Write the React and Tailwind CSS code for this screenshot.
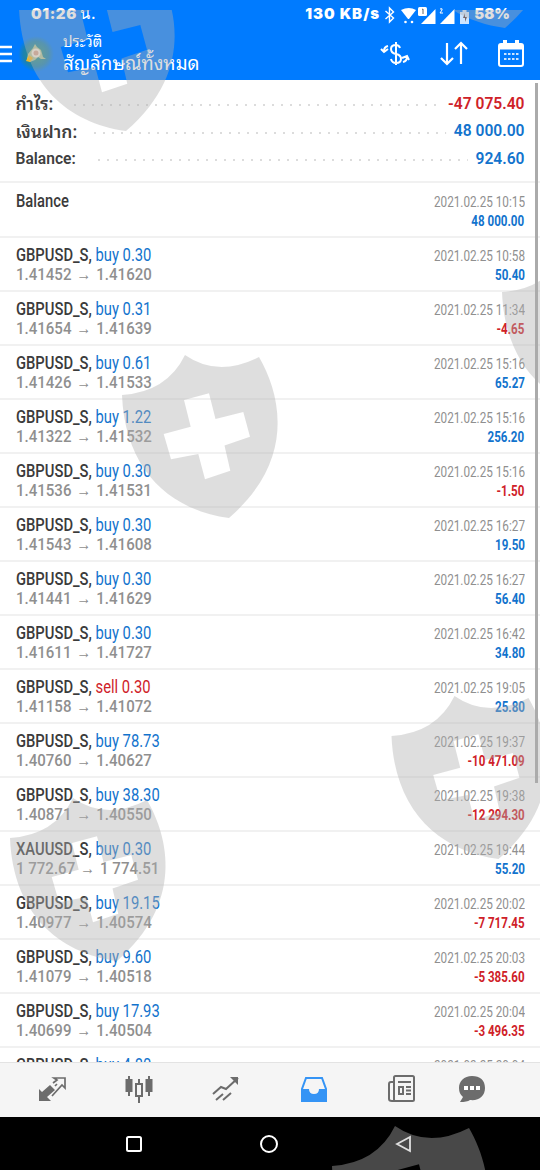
import React from "react";

const rows = [
  ["GBPUSD_S", "buy 0.30", "1.41452", "1.41620", "10:58", "50.40"],
  ["GBPUSD_S", "buy 0.31", "1.41654", "1.41639", "11:34", "-4.65"],
  ["GBPUSD_S", "buy 0.61", "1.41426", "1.41533", "15:16", "65.27"],
  ["GBPUSD_S", "buy 1.22", "1.41322", "1.41532", "15:16", "256.20"],
  ["GBPUSD_S", "buy 0.30", "1.41536", "1.41531", "15:16", "-1.50"],
  ["GBPUSD_S", "buy 0.30", "1.41543", "1.41608", "16:27", "19.50"],
  ["GBPUSD_S", "buy 0.30", "1.41441", "1.41629", "16:27", "56.40"],
  ["GBPUSD_S", "buy 0.30", "1.41611", "1.41727", "16:42", "34.80"],
  ["GBPUSD_S", "sell 0.30", "1.41158", "1.41072", "19:05", "25.80"],
  ["GBPUSD_S", "buy 78.73", "1.40760", "1.40627", "19:37", "-10 471.09"],
  ["GBPUSD_S", "buy 38.30", "1.40871", "1.40550", "19:38", "-12 294.30"],
  ["XAUUSD_S", "buy 0.30", "1 772.67", "1 774.51", "19:44", "55.20"],
  ["GBPUSD_S", "buy 19.15", "1.40977", "1.40574", "20:02", "-7 717.45"],
  ["GBPUSD_S", "buy 9.60", "1.41079", "1.40518", "20:03", "-5 385.60"],
  ["GBPUSD_S", "buy 17.93", "1.40699", "1.40504", "20:04", "-3 496.35"],
  ["GBPUSD_S", "buy 4.80", "1.40690", "1.40500", "20:04", "-912.00"],
];

const tone = (v) => (v.startsWith("-") ? "text-[#cf2128]" : "text-[#1273cd]");

function Stamp({ time, value }) {
  return (
    <div className="flex flex-col items-end whitespace-nowrap">
      <span className="origin-right scale-x-[0.82] text-[14.3px] leading-[19px] text-[#8f8f8f]">2021.02.25 {time}</span>
      <span className={"origin-right scale-x-[0.81] text-[14.3px] font-bold leading-[19px] " + tone(value)}>{value}</span>
    </div>
  );
}

function Deal({ row: [symbol, side, from, to, time, value] }) {
  return (
    <div className="flex h-[54px] shrink-0 justify-between border-b-2 border-[#f1f1f1] pl-[15.5px] pr-[15.5px] pt-[7px]">
      <div className="flex flex-col items-start whitespace-nowrap">
        <span className="origin-left scale-x-[0.83] text-[17.8px] leading-[20px]">
          <span className="font-medium text-[#3b3b3b]">{symbol},</span>{" "}
          <span className={side.startsWith("sell") ? "text-[#cf2128]" : "text-[#1273cd]"}>{side}</span>
        </span>
        <span className="origin-left scale-x-[0.87] text-[17.3px] font-medium leading-[19px] text-[#8f8f8f]">
          {from} <span className="inline-block w-[20px] text-center font-['Liberation_Sans'] text-[17px] font-bold leading-none">→</span> {to}
        </span>
      </div>
      <div className="pt-[2px]"><Stamp time={time} value={value} /></div>
    </div>
  );
}

function Summary({ label, value, dots, thai }) {
  return (
    <div className="flex h-[27.5px] items-center text-[15.6px] font-semibold">
      <span className={thai ? "text-[17.5px] leading-[20px] text-[#404040]" : "text-[#404040]"}>{label}</span>
      <svg className="h-[4px] min-w-0 flex-1" aria-hidden="true">
        <line x1={dots} y1="3" x2="98%" y2="3" stroke="#dcdcdc" strokeWidth="2" strokeDasharray="2 7" />
      </svg>
      <span className={tone(value)}>{value}</span>
    </div>
  );
}

const SHIELD =
  "M185 355Q218 378 259 357C281 395 296 460 229 518C170 510 125 470 122 395Q167 392 185 355Z" +
  "M184 400L190.700 426.700L163.700 434L171 459.300L198.300 454L205 479.300L230.300 470.700L224.500 445.500L250 436.700L243.300 412L215.500 419L209 393.300Z";
const shields = [[-103, -387], [276, -490], [380, -103], [0, 0], [269.5, 341], [-112, 443], [210, 771]];

function Watermark() {
  return (
    <div className="pointer-events-none absolute inset-x-0 bottom-0 top-[10px] overflow-hidden">
      <svg className="block h-[1160px] w-[540px]" viewBox="0 10 540 1160" fill="rgb(176 176 176 / 0.41)" fillRule="evenodd">
        {shields.map(([x, y]) => <path key={x} d={SHIELD} transform={`translate(${x} ${y})`} />)}
      </svg>
    </div>
  );
}

function StatusIcons() {
  return (
    <svg width="86" height="20" viewBox="0 0 86 20" fill="white">
      <path d="M1.500 7l8 7-4 4V4l4 4-8 7" fill="none" stroke="white" strokeWidth="1.400" />
      <path d="M17 6q8-4 15 0l-7 9h-1z" />
      <circle cx="21.500" cy="18" r="1.300" /><circle cx="28" cy="18" r="1.300" />
      <path d="M51.500 5v15H37z" /><rect x="34" y="3" width="9" height="9" rx="1.500" />
      <path d="M38 5.500l1-.5v5" stroke="#666" fill="none" />
      <path d="M70.500 5v15H56z" /><path d="M56 5q3-1 2 1l-2 3h3" stroke="white" fill="none" />
      <path d="M76 8h9v12h-9zM78.500 6h4v2h-4z" opacity=".8" /><path d="M81 9l-2 5h2v4l2-5h-2z" fill="#75676c" />
    </svg>
  );
}

export default function App() {
  return (
    <div className="relative flex h-[1170px] w-[540px] flex-col overflow-hidden bg-white font-[Roboto,'Noto_Sans_Thai_Looped','Noto_Sans_Thai','Noto_Sans',sans-serif]">
      <header className="flex h-[80px] shrink-0 flex-col bg-[#007bff] text-white">
        <div className="flex h-[28px] items-center justify-between pl-[31px] pr-[30px] font-[Inter,Roboto,sans-serif] text-[15px] font-black">
          <span className="tracking-[0.6px]">01:26 <span className="font-medium">น.</span></span>
          <div className="flex items-center gap-[4px]"><span className="tracking-[1px]">130 KB/s</span><StatusIcons /><span>58%</span></div>
        </div>
        <div className="flex h-[52px] items-center">
          <svg width="12" height="18" viewBox="0 0 12 18" className="shrink-0"><path d="M0 2h12M0 9h12M0 16h12" stroke="white" strokeWidth="2.400" /></svg>
          <svg width="36" height="36" viewBox="0 0 36 36" className="ml-[6px] shrink-0">
            <defs><radialGradient id="badge"><stop offset=".35" stopColor="#2b8d91" /><stop offset=".7" stopColor="#1b82b0" /><stop offset="1" stopColor="#007bff" /></radialGradient></defs>
            <circle cx="18" cy="18" r="18" fill="url(#badge)" />
            <path d="M9 23l1-5 5-6 2-4 2 3 4 3 2 7 3 2-5 0-3-2-3 3-5 2z" fill="#b5c69a" />
            <path d="M8 25l3-6 4 3-3 4z" fill="#f0b62a" />
            <circle cx="18" cy="17" r="3.500" fill="#d9a58e" stroke="#f4e9d8" strokeWidth="2" />
          </svg>
          <div className="ml-[9px] flex flex-col whitespace-nowrap">
            <span className="text-[14.8px] leading-[20px]">ประวัติ</span>
            <span className="text-[18.7px] leading-[24px]">สัญลักษณ์ทั้งหมด</span>
          </div>
          <div className="ml-auto flex items-center gap-[29.5px] pr-[15px]">
            <svg width="30" height="28" viewBox="0 0 30 28" fill="none" stroke="white" strokeWidth="2">
              <path d="M16 2v23M20 8q-1-3-4-3-5 0-5 4t5 5q5 1 5 5t-5 4q-4 0-5-4M8 6q-4 1-4 5M1 9l3 3 4-3M23 22q4-1 4-5M22 18l5-2 2 4" />
            </svg>
            <svg width="28" height="28" viewBox="0 0 28 28" fill="none" stroke="white" strokeWidth="2.200"><path d="M7 3v21M1 18l6 6 6-6M21 24V3M15 9l6-6 6 6" /></svg>
            <svg width="28" height="30" viewBox="0 0 28 30" fill="none" stroke="white" strokeWidth="2"><rect x="2" y="5" width="24" height="22" rx="2" /><path d="M3 8h22" strokeWidth="5" /><path d="M8 1v5M20 1v5" strokeWidth="4" /><path d="M7 15h15M7 20h15" strokeWidth="2.200" strokeDasharray="2.500 1.500" opacity=".8" /></svg>
          </div>
        </div>
      </header>

      <section className="h-[103px] shrink-0 border-b-2 border-[#f1f1f1] pl-[15.5px] pr-[15.5px] pt-[10.5px]">
        <Summary label="กำไร:" value="-47 075.40" dots="21" thai />
        <Summary label="เงินฝาก:" value="48 000.00" dots="17" thai />
        <Summary label="Balance:" value="924.60" dots="22" />
      </section>

      <main className="flex min-h-0 flex-1 flex-col overflow-hidden">
        <div className="flex h-[55px] shrink-0 justify-between border-b-2 border-[#f1f1f1] pl-[15.5px] pr-[15.5px] pt-[8px]">
          <span className="origin-left scale-x-[0.83] text-[17.8px] font-medium leading-[20px] text-[#3b3b3b]">Balance</span>
          <div className="pt-[2px]"><Stamp time="10:15" value="48 000.00" /></div>
        </div>
        {rows.map((row, i) => <Deal key={i} row={row} />)}
      </main>

      <nav className="flex h-[55px] shrink-0 items-center border-t border-[#e3e3e3] bg-[#f5f5f5] pb-[3px] pl-[38px] text-[#6c6c6c]">
        <svg width="28" height="28" viewBox="0 0 28 28" fill="none" stroke="currentColor" strokeWidth="1.700"><path d="M1 26V14l3 3 8-7 5 5-8 7 4 4z" fill="currentColor" stroke="none" /><path d="M15 8l4-3-3-2h11v10l-3-3-10 11M19 9l-2 2" /></svg>
        <svg className="ml-[58px]" width="30" height="30" viewBox="0 0 30 30" fill="none" stroke="currentColor" strokeWidth="2"><path d="M5 2v20M25 2v20M15 5v5M15 23v6" /><path d="M1.500 5h7v13h-7zM21.500 5h7v13h-7z" fill="currentColor" stroke="none" /><path d="M12 10h6v12h-6z" /></svg>
        <svg className="ml-[58px]" width="28" height="28" viewBox="0 0 28 28" fill="none" stroke="currentColor" strokeWidth="2"><path d="M1 19l8-7 5 2L26 3M4 25l7-6M11 25l8-7" /><path d="M18 2h8v8z" fill="currentColor" stroke="none" /></svg>
        <svg className="ml-[60px]" width="28" height="28" viewBox="0 0 28 28" fill="none" stroke="#3594f5" strokeWidth="2"><path d="M2 25V14L6 3h16l4 11v11z" /><path d="M1 14h8q0 5 5 5t5-5h8v13H1z" fill="#3594f5" stroke="none" /></svg>
        <svg className="ml-[59px]" width="29" height="28" viewBox="0 0 29 28" fill="none" stroke="currentColor" strokeWidth="2"><rect x="7" y="1" width="20" height="25" rx="1.500" /><path d="M7 7H4q-2 0-2 2v15q0 2 3 2h4M11 7h13M19 12h5M19 15.500h5M19 19h5" /><path d="M12 12h4v7h-4z" /></svg>
        <svg className="ml-[42px]" width="28" height="28" viewBox="0 0 28 28"><path d="M14 1C6 1 1 6 1 13q0 6 4 9l-3 5q7 0 10-2c9 1 15-4 15-12S22 1 14 1z" fill="currentColor" /><path d="M6 11h4v4H6zM12 11h4v4h-4zM18 11h4v4h-4z" fill="white" /></svg>
      </nav>

      <footer className="flex h-[53px] shrink-0 items-center justify-center gap-[117px] bg-black pr-[2px]">
        <svg width="18" height="18" viewBox="0 0 18 18"><rect x="2" y="2" width="14" height="14" rx="1.500" fill="none" stroke="white" strokeWidth="2" /></svg>
        <svg width="18" height="18" viewBox="0 0 18 18"><circle cx="9" cy="9" r="8" fill="none" stroke="white" strokeWidth="2" /></svg>
        <svg width="18" height="18" viewBox="0 0 18 18"><path d="M2 9L15 2v14z" fill="none" stroke="white" strokeWidth="1.800" /></svg>
      </footer>
      <Watermark />
      <div className="absolute right-[2px] top-[83px] h-[700px] w-[3px] bg-[#ababab]" />
    </div>
  );
}
